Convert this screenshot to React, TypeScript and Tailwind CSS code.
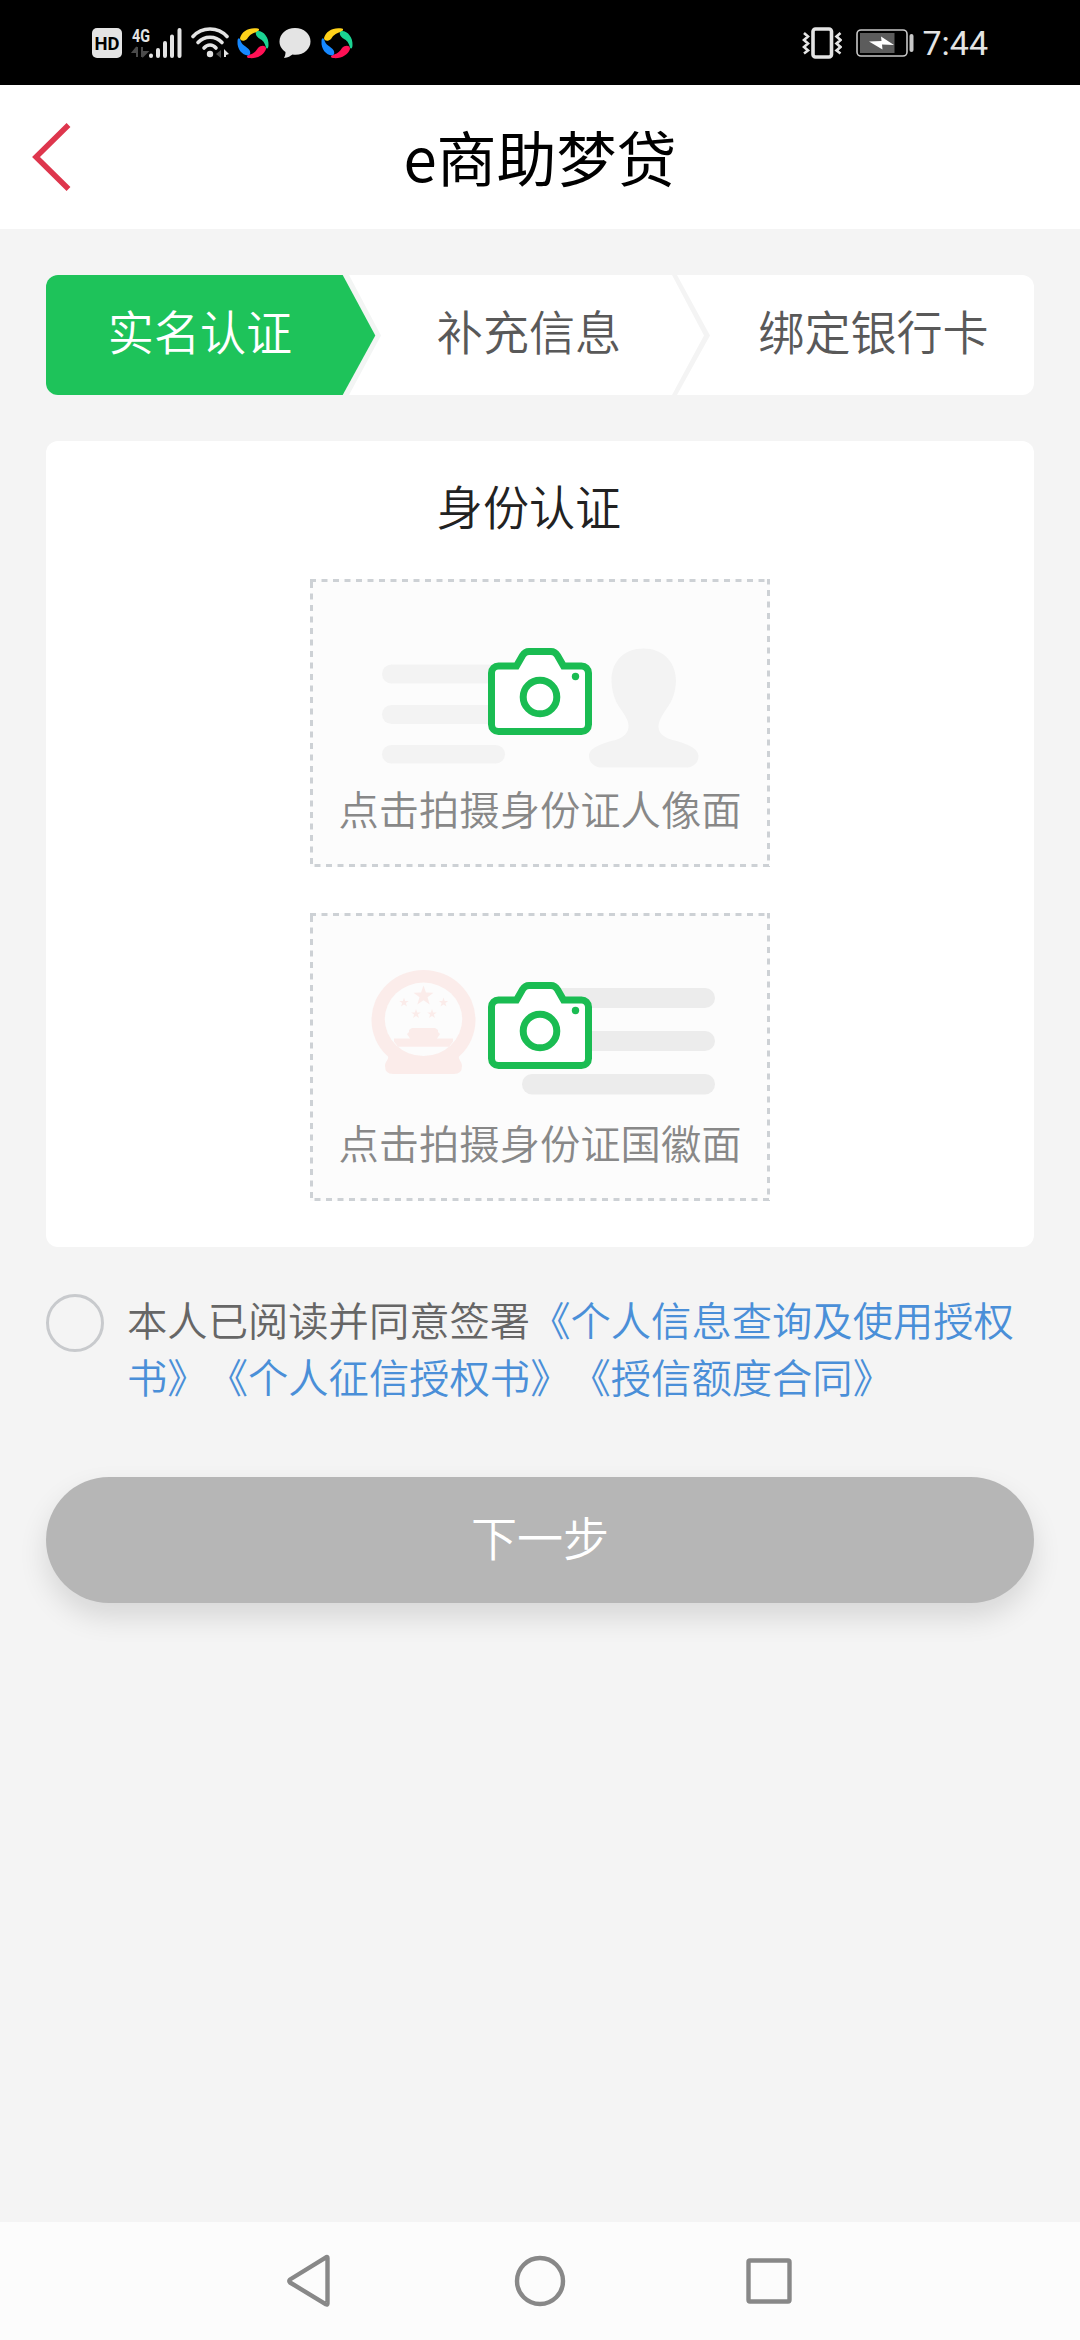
import { ReactNode } from "react";

const HdIcon = () => (
  <svg className="overflow-visible" width="30" height="30" viewBox="0 0 30 30">
    <rect width="30" height="30" rx="5" fill="#e4e4e4" />
    <text
      x="15"
      y="21.500"
      textAnchor="middle"
      textLength="25"
      lengthAdjust="spacingAndGlyphs"
      fontFamily="Roboto, sans-serif"
      fontWeight="700"
      fontSize="19"
      fill="#000"
    >
      HD
    </text>
  </svg>
);

const SignalIcon = () => (
  <svg className="overflow-visible" width="50" height="32" viewBox="0 0 50 32">
    <text
      x="0"
      y="15"
      textLength="18"
      lengthAdjust="spacingAndGlyphs"
      fontFamily="Roboto, sans-serif"
      fontWeight="700"
      fontSize="19"
      fill="#e4e4e4"
    >
      4G
    </text>
    <path d="M5 20v10M5 20l-4 5h4M10 20v10M10 30l5-5h-5" stroke="#4a4a4a" strokeWidth="2" fill="#4a4a4a" />
    <g stroke="#e4e4e4" strokeWidth="4" strokeLinecap="round">
      <path d="M19 28.500v.5M26 23v6M33 16v13M40 9.500V29M47.500 3v26" />
    </g>
  </svg>
);

const WifiIcon = () => (
  <svg width="38" height="32" viewBox="0 0 38 32">
    <g fill="none" stroke="#e4e4e4" strokeWidth="3.600" strokeLinecap="round">
      <path d="M2 9.500C11 -0.500 27 -0.500 36 9.500" />
      <path d="M7 15.500C13.500 8.500 24.500 8.500 31 15.500" />
      <path d="M13 21C16.500 17 21.500 17 25 21" />
    </g>
    <circle cx="19" cy="27" r="3.200" fill="#e4e4e4" />
    <path d="M30 23v8l-5-4z" fill="#4a4a4a" />
    <path d="M33 30v-8l5 5-3 1v2z" fill="#e4e4e4" />
  </svg>
);

const SwirlIcon = () => (
  <svg width="32" height="32" viewBox="0 0 32 32">
    <path d="M3 11C5 4 12 0 21 1.500C23 2 22 4 20 5C14 6.500 12 9 10 12C7 15 3 14 3 11Z" fill="#ffd21a" />
    <path d="M21 4C27 4 32 11 31.500 18C31.500 22 29.500 23 28.500 19C27 14 25 13 21.500 11C18 8 18 4.500 21 4Z" fill="#1bd392" />
    <path d="M29 22C27 28 20 32 12 31C8.500 30.500 10 28 13 27.500C17 26.500 19 24 21 21C24 17.500 29.500 18 29 22Z" fill="#ff1155" />
    <path d="M11 28.500C5 28 0 22 .5 14.500C.5 11 2.500 10 3.500 13.500C5 18 7.500 18.500 11 21.500C14 24 14 28 11 28.500Z" fill="#1688ff" />
  </svg>
);

const BubbleIcon = () => (
  <svg width="32" height="32" viewBox="0 0 32 32">
    <path d="M16 1C7 1 .5 7 .5 14.500C.5 19 3 22.500 6.500 25C6.500 27.500 6 29 5 31C9 30.500 11.500 29 13.500 27.500C24 29 31.500 22.500 31.500 14.500C31.500 7 25 1 16 1Z" fill="#e4e4e4" />
  </svg>
);

const VibrateIcon = () => (
  <svg width="40" height="32" viewBox="0 0 40 32">
    <rect x="11" y="2" width="18.500" height="28" rx="2.500" fill="none" stroke="#e4e4e4" strokeWidth="3.600" />
    <path
      d="M2 6l4 3.500-4 3.500 4 3.500-4 3.500 4 3.500-4 3M38.500 6l-4 3.500 4 3.500-4 3.500 4 3.500-4 3.500 4 3"
      fill="none"
      stroke="#e4e4e4"
      strokeWidth="2.600"
    />
  </svg>
);

const BatteryIcon = () => (
  <svg width="58" height="28" viewBox="0 0 58 28">
    <rect x="1" y="1" width="50" height="26" rx="4" fill="none" stroke="#c8c8c8" strokeWidth="1.600" />
    <rect x="4" y="4" width="34.500" height="20" fill="#5c5c5c" />
    <path d="M13 12.500l12.500-.5-.5-4.500L38 16l-12-.5.500 5z" fill="#fff" />
    <rect x="53.500" y="5" width="4" height="18" rx="2" fill="#c8c8c8" />
  </svg>
);

const StatusBar = () => (
  <div className="flex h-[85px] items-center bg-black pl-[92px] pr-[92px]">
    <div className="flex items-center">
      <HdIcon />
      <div className="ml-[10px]">
        <SignalIcon />
      </div>
      <div className="ml-[9px]">
        <WifiIcon />
      </div>
      <div className="ml-[8px]">
        <SwirlIcon />
      </div>
      <div className="ml-[10px]">
        <BubbleIcon />
      </div>
      <div className="ml-[10px]">
        <SwirlIcon />
      </div>
    </div>
    <div className="ml-auto flex items-center">
      <VibrateIcon />
      <div className="ml-[14px]">
        <BatteryIcon />
      </div>
      <span className="ml-[8px] font-['Roboto',sans-serif] text-[34px] leading-[36px] text-[#e4e4e4]">
        7:44
      </span>
    </div>
  </div>
);

const Header = () => (
  <header className="flex h-[144px] items-center bg-white">
    <svg className="ml-[32px]" width="40" height="70" viewBox="0 0 40 70">
      <path d="M36.500 3L4 35l32.500 32" fill="none" stroke="#de364d" strokeWidth="5.500" />
    </svg>
    <h1 className="mr-[72px] flex-1 pb-[2px] text-center text-[60px] leading-[86px] text-black">
      e商助梦贷
    </h1>
  </header>
);

const Steps = () => (
  <div className="flex h-[120px] overflow-hidden rounded-[12px] bg-white text-[46.08px] leading-[111px] font-[350] text-[#595959]">
    <div className="w-[296px] bg-[#1ec35a] pl-[12px] text-center text-white">
      实名认证
    </div>
    <svg width="39" height="120" viewBox="0 0 39 120">
      <path d="M0 0h7l32 60.500L7 120H0z" fill="#f3f5f4" />
      <path d="M0 0h.7l32.600 60.500L.7 120H0z" fill="#1ec35a" />
    </svg>
    <div className="w-[291px] pl-[5px] text-center">补充信息</div>
    <svg width="39" height="120" viewBox="0 0 39 120">
      <path d="M0 0h5l33 60.500L5 120H0l32-59.500z" fill="#f4f4f4" />
    </svg>
    <div className="flex-1 pl-[2px] text-center">绑定银行卡</div>
  </div>
);

const Camera = () => (
  <>
    <path
      d="M188.500 87H206.500L212.500 76.500Q215 72.500 219 72.500H241Q245 72.500 247.500 76.500L253.500 87H271.500a7 7 0 0 1 7 7V145.500a7 7 0 0 1-7 7H188.500a7 7 0 0 1-7-7V94a7 7 0 0 1 7-7z"
      fill="#fff"
      stroke="#1abc52"
      strokeWidth="7"
    />
    <circle cx="230" cy="118" r="16.800" fill="#fff" stroke="#1abc52" strokeWidth="7" />
    <circle cx="265.500" cy="97.500" r="3.700" fill="#1abc52" />
  </>
);

const PortraitArt = () => (
  <g fill="#f3f3f3">
    <rect x="72" y="85.500" width="123" height="19" rx="9.500" />
    <rect x="72" y="126" width="123" height="19" rx="9.500" />
    <rect x="72" y="166" width="123" height="18.500" rx="9.250" />
    <path d="M333.500 69.500C314 69.500 301 83 301.500 102C302 117 307 125 312 132C316 138 319 143 318.500 148C318 154 314 158 307 160.500C294 164 279 168 279 177C279 184 285 188.500 292 188.500H376C383 188.500 388.500 184 388.500 177C388 168 374 164 361 160.500C353 158 349 154 348.500 148C348.500 143 351 138 355 132C360 125 365.500 117 366 102C366 83 353 69.500 333.500 69.500Z" />
  </g>
);

const star = (cx: number, cy: number, r: number) =>
  Array.from({ length: 10 }, (_, i) => {
    const radius = i % 2 ? r * 0.4 : r;
    const angle = (Math.PI * i) / 5 - Math.PI / 2;
    return `${cx + radius * Math.cos(angle)},${cy + radius * Math.sin(angle)}`;
  }).join(" ");

const EmblemArt = () => (
  <>
    <g fill="#ececec">
      <rect x="212" y="75" width="193" height="20" rx="10" />
      <rect x="212" y="118" width="193" height="20" rx="10" />
      <rect x="212" y="161" width="193" height="20.500" rx="10" />
    </g>
    <g fill="#fbecea">
      <ellipse cx="113.500" cy="107" rx="52" ry="50" />
      <path d="M78 136h71v7c-1 4 3 5 3 10q0 8-8 8H83q-8 0-8-8c0-5 4-6 3-10z" />
    </g>
    <ellipse cx="113.500" cy="106.300" rx="38.700" ry="36.700" fill="#fcfcfc" />
    <g fill="#fbecea">
      <polygon points={star(113.5, 83, 10.5)} />
      <polygon points={star(94, 89.5, 5)} />
      <polygon points={star(133.5, 89.5, 5)} />
      <polygon points={star(106, 101, 5)} />
      <polygon points={star(122, 101, 5)} />
      <path d="M102 115h23l3 2v2l2 2-3 4.500h16v3l-4 5.200H88l-4-5.200v-3h16l-3-4.500 2-2v-2z" />
    </g>
  </>
);

const UploadBox = ({ label, children }: { label: string; children: ReactNode }) => (
  <button className="relative flex h-[288px] w-[460px] flex-col bg-[#fcfcfc]">
    <svg className="absolute inset-0" width="460" height="288" viewBox="0 0 460 288">
      <path
        d="M0 1.500H455M1.500 3V288M458.500 -.5V288M4.500 286.500H460"
        stroke="#cdd1d5"
        strokeWidth="3"
        strokeDasharray="6 5.500"
      />
    </svg>
    <svg className="shrink-0" width="460" height="197" viewBox="0 0 460 197">
      {children}
      <Camera />
    </svg>
    <span className="w-full text-center text-[40.32px] leading-[64px] font-[350] text-[#888]">{label}</span>
  </button>
);

const Agreement = () => (
  <div className="mt-[46px] flex h-[115px]">
    <span className="mt-px size-[58px] shrink-0 rounded-full border-[3px] border-[#c8cacd]" />
    <p className="-mt-[3px] ml-[23px] w-[900px] text-[40.32px] leading-[57px] font-[350] text-[#666] [text-spacing-trim:space-all]">
      本人已阅读并同意签署
      <span className="text-[#4a8fd8]">
        《个人信息查询及使用授权书》《个人征信授权书》《授信额度合同》
      </span>
    </p>
  </div>
);

const NavBar = () => (
  <nav className="flex h-[118px] items-center bg-[#fcfcfc] pl-[285px]">
    <svg width="510" height="60" viewBox="0 0 510 60" fill="none" stroke="#888" strokeWidth="4.400" strokeLinejoin="round">
      <path d="M42.500 7v45.500q0 1.500-1.500.8L5 31.500q-1.500-1.500 0-3L41 6.300q1.500-.8 1.500.7z" />
      <circle cx="255" cy="30" r="23" />
      <rect x="463.500" y="9.500" width="41" height="41" rx="1.500" />
    </svg>
  </nav>
);

export default function App() {
  return (
    <div className="flex h-[2340px] w-[1080px] flex-col bg-[#f4f4f4] font-['Noto_Sans_CJK_SC',sans-serif]">
      <StatusBar />
      <Header />
      <main className="flex-1 px-[46px] pt-[46px]">
        <Steps />
        <section className="mt-[46px] flex h-[806px] flex-col items-center rounded-[12px] bg-white pt-[31px]">
          <h2 className="mr-[22px] text-[46.08px] leading-[66px] font-[350] text-[#222]">身份认证</h2>
          <div className="mt-[41px] flex flex-col gap-[46px]">
            <UploadBox label="点击拍摄身份证人像面">
              <PortraitArt />
            </UploadBox>
            <UploadBox label="点击拍摄身份证国徽面">
              <EmblemArt />
            </UploadBox>
          </div>
        </section>
        <Agreement />
        <button className="mt-[69px] h-[126px] w-full rounded-full bg-[#b6b6b6] pb-[6px] text-[46.08px] font-[350] text-white shadow-[0_14px_29px_rgba(0,0,0,0.12)]">
          下一步
        </button>
      </main>
      <NavBar />
    </div>
  );
}
